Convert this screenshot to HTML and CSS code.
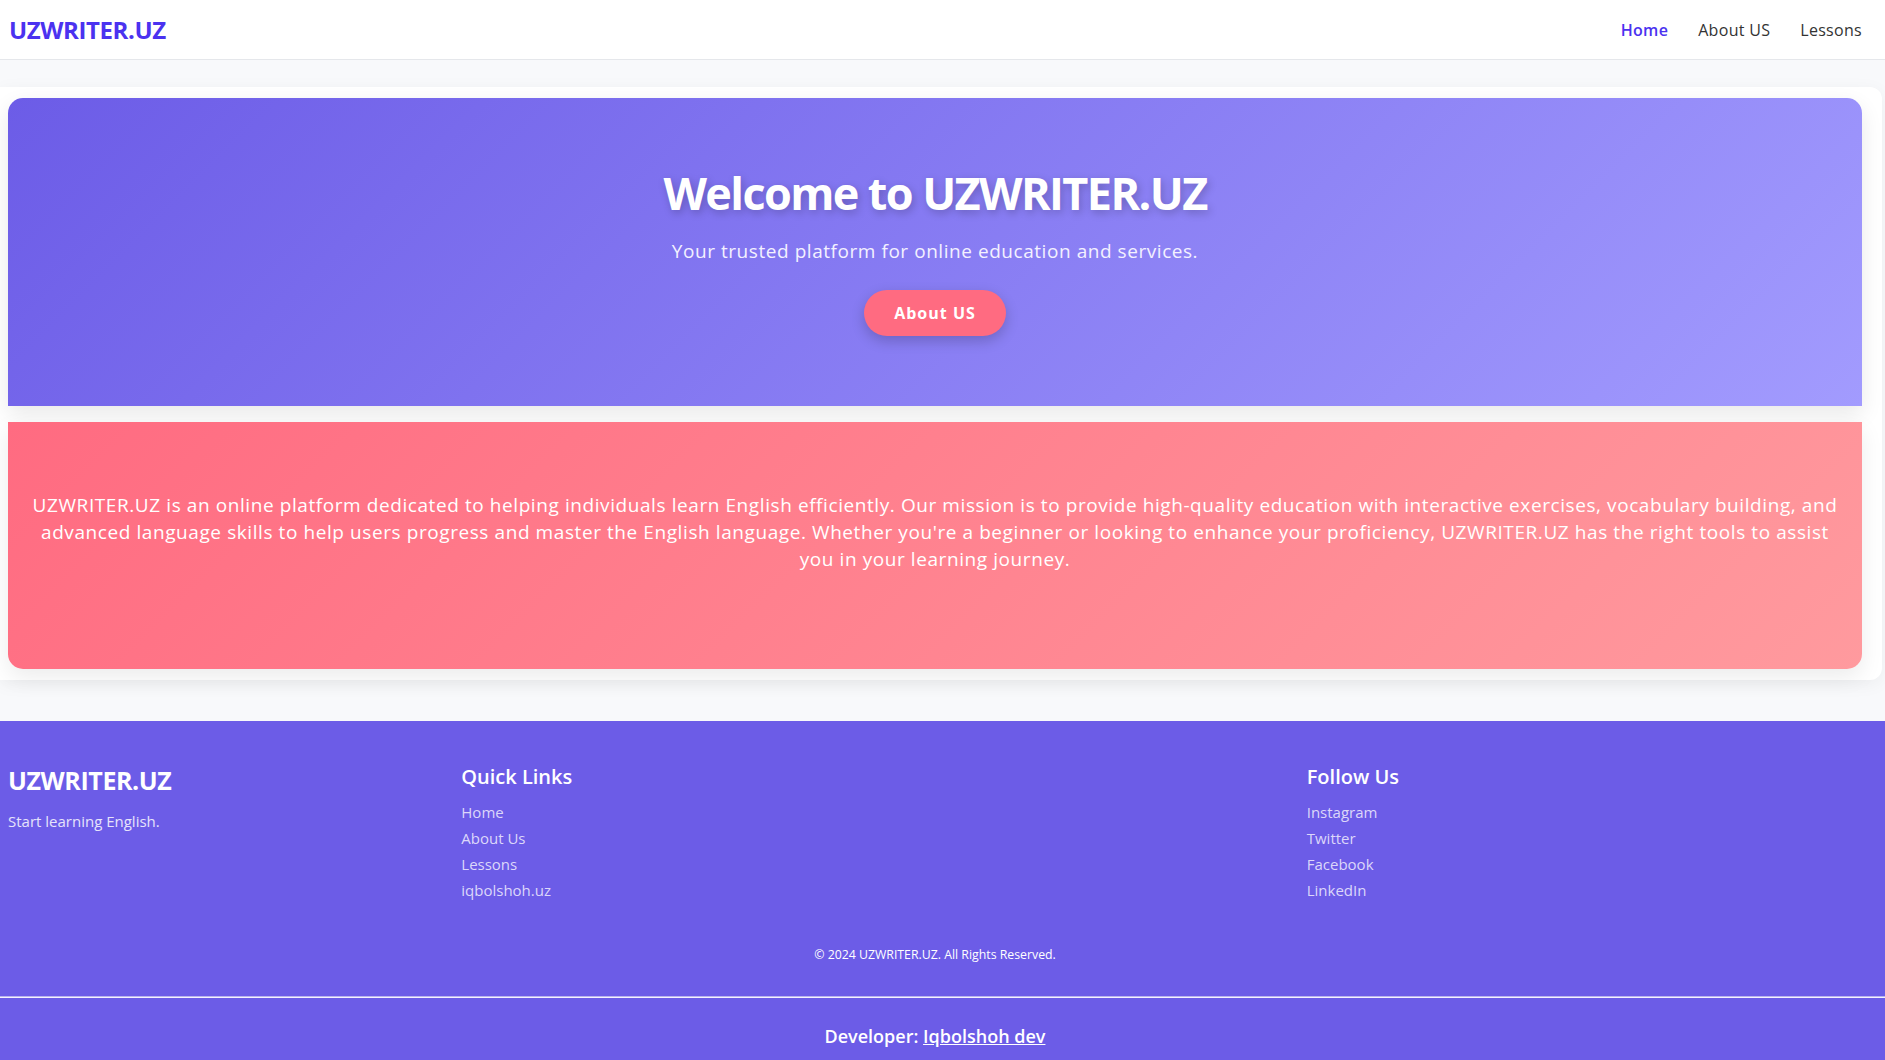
FILE: index.html
```html
<!DOCTYPE html>
<html lang="en">
<head>
<meta charset="utf-8">
<title>UZWRITER.UZ</title>
<link rel="stylesheet" href="styles.css">
</head>
<body>
<header class="site-header">
  <a class="logo" href="#">UZWRITER.UZ</a>
  <nav class="nav">
    <a class="nav-link active" href="#">Home</a>
    <a class="nav-link" href="#">About US</a>
    <a class="nav-link" href="#">Lessons</a>
  </nav>
</header>

<main class="main">
  <div class="panel">
    <section class="hero">
      <h1 class="hero-title">Welcome to UZWRITER.UZ</h1>
      <p class="hero-sub">Your trusted platform for online education and services.</p>
      <a class="hero-btn" href="#">About US</a>
    </section>
    <section class="about">
      <p class="about-text">UZWRITER.UZ is an online platform dedicated to helping individuals learn English efficiently. Our mission is to provide high-quality education with interactive exercises, vocabulary building, and advanced language skills to help users progress and master the English language. Whether you're a beginner or looking to enhance your proficiency, UZWRITER.UZ has the right tools to assist you in your learning journey.</p>
    </section>
  </div>
</main>

<footer class="footer">
  <div class="footer-inner">
    <div class="footer-grid">
      <div class="footer-col">
        <h2 class="footer-logo">UZWRITER.UZ</h2>
        <p class="footer-tag">Start learning English.</p>
      </div>
      <div class="footer-col">
        <h3 class="footer-head">Quick Links</h3>
        <ul class="footer-list">
          <li><a href="#">Home</a></li>
          <li><a href="#">About Us</a></li>
          <li><a href="#">Lessons</a></li>
          <li><a href="#">iqbolshoh.uz</a></li>
        </ul>
      </div>
      <div class="footer-col">
        <h3 class="footer-head">Follow Us</h3>
        <ul class="footer-list">
          <li><a href="#">Instagram</a></li>
          <li><a href="#">Twitter</a></li>
          <li><a href="#">Facebook</a></li>
          <li><a href="#">LinkedIn</a></li>
        </ul>
      </div>
    </div>
    <p class="copyright">&copy; 2024 UZWRITER.UZ. All Rights Reserved.</p>
  </div>
  <hr class="footer-rule">
  <div class="footer-inner">
    <p class="developer">Developer: <a href="#">Iqbolshoh dev</a></p>
  </div>
</footer>
</body>
</html>
```

FILE: styles.css
```css
* { box-sizing: border-box; }

html, body {
  margin: 0;
  padding: 0;
}

body {
  font-family: "Open Sans", "Liberation Sans", sans-serif;
  color: #333;
  background: #f8f9fb;
}

a { text-decoration: none; color: inherit; }

.site-header {
  height: 60px;
  background: #fff;
  border-bottom: 1px solid #e5e7eb;
  display: flex;
  align-items: center;
  justify-content: space-between;
  padding: 0 23px 0 9px;
}

.logo {
  font-size: 24px;
  font-weight: 700;
  color: #4b32f0;
  letter-spacing: -0.4px;
}

.nav {
  display: flex;
  gap: 30px;
}

.nav-link {
  font-size: 16px;
  color: #333;
  letter-spacing: 0.3px;
}

.nav-link.active {
  color: #4b32f0;
  font-weight: 600;
}

.main {
  padding: 27px 3px 41px 0;
}

.panel {
  background: #fff;
  border-radius: 0 12px 12px 0;
  box-shadow: 0 4px 18px rgba(0, 0, 0, 0.05);
  padding: 11px 20px 11px 8px;
  display: flex;
  flex-direction: column;
  gap: 16px;
}

.hero {
  background: linear-gradient(135deg, #6c5ce7 0%, #a29bfe 100%);
  border-radius: 15px 15px 0 0;
  box-shadow: 0 8px 22px rgba(0, 0, 0, 0.09);
  padding: 66px 20px 70px;
  display: flex;
  flex-direction: column;
  align-items: center;
  text-align: center;
  color: #fff;
}

.hero-title {
  margin: 0;
  font-size: 45px;
  line-height: 57.6px;
  font-weight: 700;
  letter-spacing: -1.6px;
  text-shadow: 2px 3px 8px rgba(0, 0, 0, 0.22);
}

.hero-sub {
  margin: 16px 0 0;
  font-size: 19px;
  line-height: 27px;
  letter-spacing: 0.55px;
  color: #f3f1ff;
}

.hero-btn {
  margin-top: 25.5px;
  display: inline-block;
  background: #ff6b81;
  color: #fff;
  font-weight: 700;
  font-size: 16px;
  letter-spacing: 1px;
  line-height: 22px;
  padding: 12px 30px;
  border-radius: 30px;
  box-shadow: 0 5px 14px rgba(0, 0, 0, 0.2);
}

.about {
  background: linear-gradient(135deg, #ff6b81 0%, #ff9a9e 100%);
  border-radius: 0 0 15px 15px;
  box-shadow: 0 8px 22px rgba(0, 0, 0, 0.08);
  padding: 70px 20px 96px;
  text-align: center;
}

.about-text {
  margin: 0;
  font-size: 19px;
  line-height: 27px;
  letter-spacing: 0.58px;
  color: #fff;
}

.footer {
  background: #6c5ce7;
  color: #fff;
  padding-top: 44px;
  padding-bottom: 20px;
}

.footer-inner {
  padding: 0 23px 0 8px;
}

.footer-grid {
  display: grid;
  grid-template-columns: 24.45% 45.6% 1fr;
  align-items: start;
}

.footer-logo {
  margin: 0;
  font-size: 25px;
  line-height: 30px;
  font-weight: 700;
  letter-spacing: -0.4px;
}

.footer-tag {
  margin: 15px 0 0;
  font-size: 15px;
  line-height: 22px;
  color: #e6e3fb;
}

.footer-head {
  margin: 0;
  font-size: 20px;
  line-height: 24px;
  font-weight: 600;
}

.footer-list {
  list-style: none;
  margin: 10px 0 0;
  padding: 0;
}

.footer-list li {
  font-size: 15px;
  line-height: 26px;
  color: #dcd7fa;
}

.copyright {
  margin: 42px 0 0;
  text-align: center;
  font-size: 12.3px;
  line-height: 20px;
}

.footer-rule {
  margin: 31px 0 0;
  border: 0;
  border-top: 1px solid #b9b3ee;
  border-bottom: 1px solid #f4f2ff;
  height: 0;
}

.developer {
  margin: 25px 0 0;
  text-align: center;
  font-size: 18px;
  line-height: 27px;
  font-weight: 600;
}

.developer a {
  text-decoration: underline;
}
```
